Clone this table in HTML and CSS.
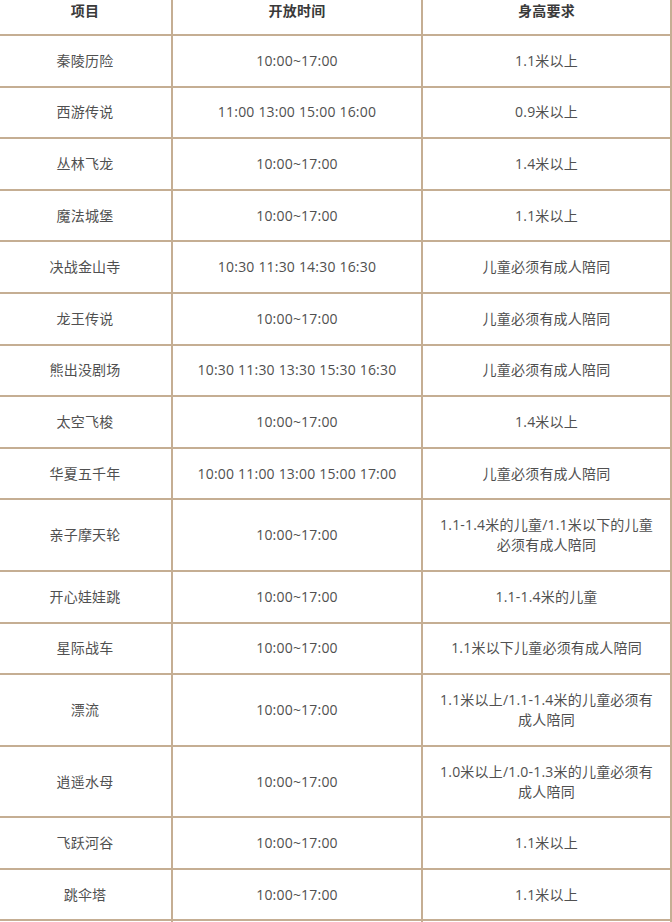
FILE: index.html
```html
<!DOCTYPE html>
<html lang="zh-CN">
<head>
<meta charset="utf-8">
<title>项目开放时间</title>
<link rel="stylesheet" href="styles.css">
</head>
<body>
<table class="schedule">
  <colgroup>
    <col class="c1"><col class="c2"><col class="c3">
  </colgroup>
  <thead>
    <tr><th>项目</th><th>开放时间</th><th>身高要求</th></tr>
  </thead>
  <tbody>
    <tr><td>秦陵历险</td><td>10:00~17:00</td><td>1.1米以上</td></tr>
    <tr><td>西游传说</td><td>11:00 13:00 15:00 16:00</td><td>0.9米以上</td></tr>
    <tr><td>丛林飞龙</td><td>10:00~17:00</td><td>1.4米以上</td></tr>
    <tr><td>魔法城堡</td><td>10:00~17:00</td><td>1.1米以上</td></tr>
    <tr><td>决战金山寺</td><td>10:30 11:30 14:30 16:30</td><td>儿童必须有成人陪同</td></tr>
    <tr><td>龙王传说</td><td>10:00~17:00</td><td>儿童必须有成人陪同</td></tr>
    <tr><td>熊出没剧场</td><td>10:30 11:30 13:30 15:30 16:30</td><td>儿童必须有成人陪同</td></tr>
    <tr><td>太空飞梭</td><td>10:00~17:00</td><td>1.4米以上</td></tr>
    <tr><td>华夏五千年</td><td>10:00 11:00 13:00 15:00 17:00</td><td>儿童必须有成人陪同</td></tr>
    <tr><td>亲子摩天轮</td><td>10:00~17:00</td><td>1.1-1.4米的儿童/1.1米以下的儿童<br>必须有成人陪同</td></tr>
    <tr><td>开心娃娃跳</td><td>10:00~17:00</td><td>1.1-1.4米的儿童</td></tr>
    <tr><td>星际战车</td><td>10:00~17:00</td><td>1.1米以下儿童必须有成人陪同</td></tr>
    <tr><td>漂流</td><td>10:00~17:00</td><td>1.1米以上/1.1-1.4米的儿童必须有<br>成人陪同</td></tr>
    <tr><td>逍遥水母</td><td>10:00~17:00</td><td>1.0米以上/1.0-1.3米的儿童必须有<br>成人陪同</td></tr>
    <tr><td>飞跃河谷</td><td>10:00~17:00</td><td>1.1米以上</td></tr>
    <tr><td>跳伞塔</td><td>10:00~17:00</td><td>1.1米以上</td></tr>
    <tr class="stub"><td></td><td></td><td></td></tr>
  </tbody>
</table>
</body>
</html>
```

FILE: styles.css
```css
html, body {
  margin: 0;
  padding: 0;
  background: #ffffff;
  overflow: hidden;
}

body {
  font-family: "Open Sans", "Noto Sans CJK SC", sans-serif;
  font-size: 14px;
  color: #505050;
}

.schedule {
  border-collapse: separate;
  border-spacing: 0;
  table-layout: fixed;
  width: 675px;
  margin: -14px 0 0 -3px;
  border-left: 2px solid #c5ae93;
}

.schedule col.c1 { width: 174px; }
.schedule col.c2 { width: 250px; }
.schedule col.c3 { width: 249px; }

.schedule th,
.schedule td {
  border-right: 2px solid #c5ae93;
  border-bottom: 2px solid #c5ae93;
  text-align: center;
  vertical-align: middle;
  line-height: 20px;
  padding: 14.8px 4px;
  white-space: nowrap;
  letter-spacing: 0.2px;
}

.schedule th {
  font-weight: bold;
  color: #3a3a3a;
  padding: 14.8px 4px 13.2px;
}

.schedule tr.stub td {
  height: 20px;
}
```
